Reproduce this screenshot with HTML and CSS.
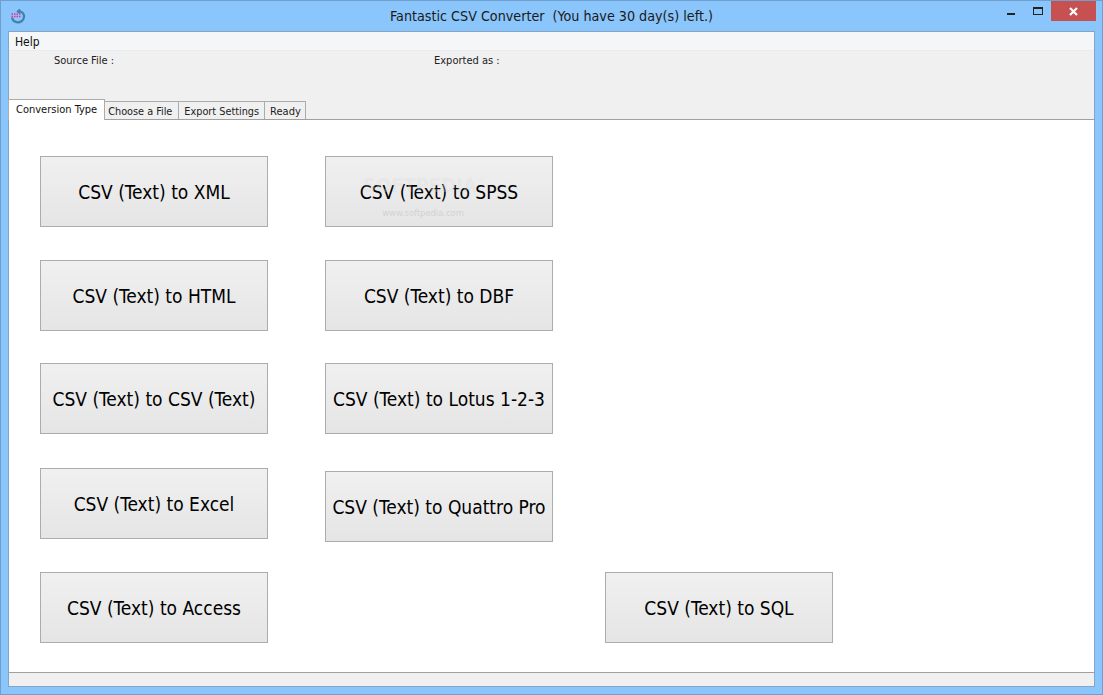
FILE: index.html
```html
<!DOCTYPE html>
<html lang="en">
<head>
<meta charset="utf-8">
<title>Fantastic CSV Converter</title>
<link rel="stylesheet" href="styles.css">
</head>
<body>
<div class="window">
  <header class="titlebar">
    <svg class="app-icon" width="16" height="16" viewBox="0 0 16 16">
      <path d="M10 1.5 L8 3.5 L10 5 M8.5 3.3 C12 3 14.5 6 14 9 C13.5 12.5 10.5 14.5 7.5 14.3 C4.5 14 2.5 12 2 9.5" fill="none" stroke="#3f83a8" stroke-width="2.2"/>
      <path d="M1.5 6 H11.5 M1.5 8.5 H10.5" stroke="#ec2f97" stroke-width="1.6" stroke-dasharray="1.5 1" fill="none"/>
    </svg>
    <div class="title">Fantastic CSV Converter&nbsp; (You have 30 day(s) left.)</div>
    <div class="controls">
      <div class="ctl"><span class="min-glyph"></span></div>
      <div class="ctl"><span class="max-glyph"></span></div>
      <div class="close">
        <svg width="9" height="9" viewBox="0 0 9 9"><path d="M1 1 L8 8 M8 1 L1 8" stroke="#fff" stroke-width="2.2" fill="none"/></svg>
      </div>
    </div>
  </header>
  <div class="client">
    <div class="menubar"><span class="menu-item">Help</span></div>
    <div class="infobar">
      <span class="info-source">Source File :</span>
      <span class="info-export">Exported as :</span>
    </div>
    <div class="tabs">
      <div class="tab active">Conversion Type</div>
      <div class="tab choose">Choose a File</div>
      <div class="tab">Export Settings</div>
      <div class="tab ready">Ready</div>
    </div>
    <main class="panel">
      <div class="col col-a">
        <button class="btn">CSV (Text) to XML</button>
        <button class="btn">CSV (Text) to HTML</button>
        <button class="btn tight">CSV (Text) to CSV (Text)</button>
        <button class="btn wide">CSV (Text) to Excel</button>
        <button class="btn">CSV (Text) to Access</button>
      </div>
      <div class="col col-b">
        <button class="btn wm-host">CSV (Text) to SPSS
          <span class="wm"><span class="wm-logo">SOFTPEDIA<sup class="wm-tm">™</sup></span><span class="wm-url">www.softpedia.com</span></span>
        </button>
        <button class="btn">CSV (Text) to DBF</button>
        <button class="btn tight">CSV (Text) to Lotus 1-2-3</button>
        <button class="btn widest">CSV (Text) to Quattro Pro</button>
      </div>
      <div class="col col-c">
        <button class="btn">CSV (Text) to SQL</button>
      </div>
    </main>
    <footer class="statusbar"></footer>
  </div>
</div>
</body>
</html>
```
FILE: styles.css
```css
* { box-sizing: border-box; }
html, body { margin: 0; padding: 0; }
body { width: 1103px; height: 695px; overflow: hidden; font-family: "DejaVu Sans Condensed", "Noto Sans", sans-serif; color: #000; }
.window {
  width: 1103px; height: 695px; display: flex; flex-direction: column;
  background: #8ac5fb; border: 1px solid #6f9fcf; padding: 0 7px 7px 7px;
}
.titlebar { height: 30px; flex: none; display: flex; align-items: flex-start; position: relative; }
.app-icon { margin: 7px 0 0 2px; }
.title {
  position: absolute; left: 0; right: 0; top: 5px; text-align: center;
  font-size: 14.2px; line-height: 20px; color: #1a1a1a;
}
.controls { margin-left: auto; display: flex; height: 20px; margin-right: -1px; position: relative; }
.ctl { width: 27px; height: 20px; position: relative; display: flex; justify-content: center; }
.min-glyph { width: 8px; height: 2px; background: #222; margin-top: 12px; }
.max-glyph { width: 10px; height: 8px; border: 1px solid #222; border-top-width: 2px; margin-top: 6px; }
.close { width: 45px; height: 20px; background: #c75050; display: flex; align-items: center; justify-content: center; }
.client {
  flex: 1; display: flex; flex-direction: column; background: #f0f0f0;
  border: 1px solid #86a5c4;
  min-height: 0;
}
.menubar { height: 19px; flex: none; background: #f5f6f7; border-bottom: 1px solid #e9ecee; font-size: 12px; line-height: 18px; padding: 1px 0 0 6px; color: #111; }
.infobar { height: 48px; flex: none; position: relative; font-size: 11px; line-height: 18px; display: flex; padding: 1px 0 0 45px; color: #222; }
.info-source { width: 380px; }
.tabs { height: 21px; flex: none; display: flex; align-items: flex-end; border-bottom: 1px solid #a0a0a0; position: relative; padding-right: 1px; margin-left: -1px; }
.tab {
  height: 18px; font-size: 10.8px; line-height: 17px; padding: 1px 5px 0; background: #f0f0f0;
  border: 1px solid #acacac; border-left-width: 0; border-bottom: 0; color: #222;
}
.tab.choose { padding-left: 3px; padding-right: 6px; }
.tab.ready { font-size: 11px; padding-right: 4px; }
.tab.active {
  background: #fff; border-left-width: 1px; padding: 1px 7px 0; font-size: 11px; line-height: 17px;
  margin-bottom: -1px; height: 21px; color: #111;
}
.panel { flex: 1; background: #fff; display: flex; padding: 36px 0 0 31px; min-height: 0; }
.col { display: flex; flex-direction: column; width: 228px; gap: 33px; }
.col-b { margin-left: 57px; }
.col-c { margin-left: 52px; padding-top: 416px; }
.btn {
  width: 228px; height: 71px; flex: none; position: relative; padding: 1px 0 0;
  font: 400 19px/24px "DejaVu Sans Condensed", "Noto Sans", sans-serif; color: #000;
  background: linear-gradient(#f0f0f0, #e5e5e5); border: 1px solid #acacac; border-radius: 0;
}
.btn.tight { margin-top: -1px; }
.btn.wide { margin-top: 1px; }
.btn.widest { margin-top: 4px; }
.wm { position: absolute; left: 34px; top: 19px; width: 126px; display: flex; flex-direction: column; align-items: center; color: #dcdcdc; pointer-events: none; }
.wm-logo { font-size: 20px; line-height: 18px; font-weight: 700; opacity: .3; white-space: nowrap; }
.wm-tm { font-size: 7px; line-height: 0; font-weight: 400; }
.wm-url { font-size: 9.3px; line-height: 12px; margin-top: 13px; color: #d2d2d2; }
.statusbar { height: 14px; flex: none; background: #f0f0f0; border-top: 1px solid #a0a0a0; }
```
